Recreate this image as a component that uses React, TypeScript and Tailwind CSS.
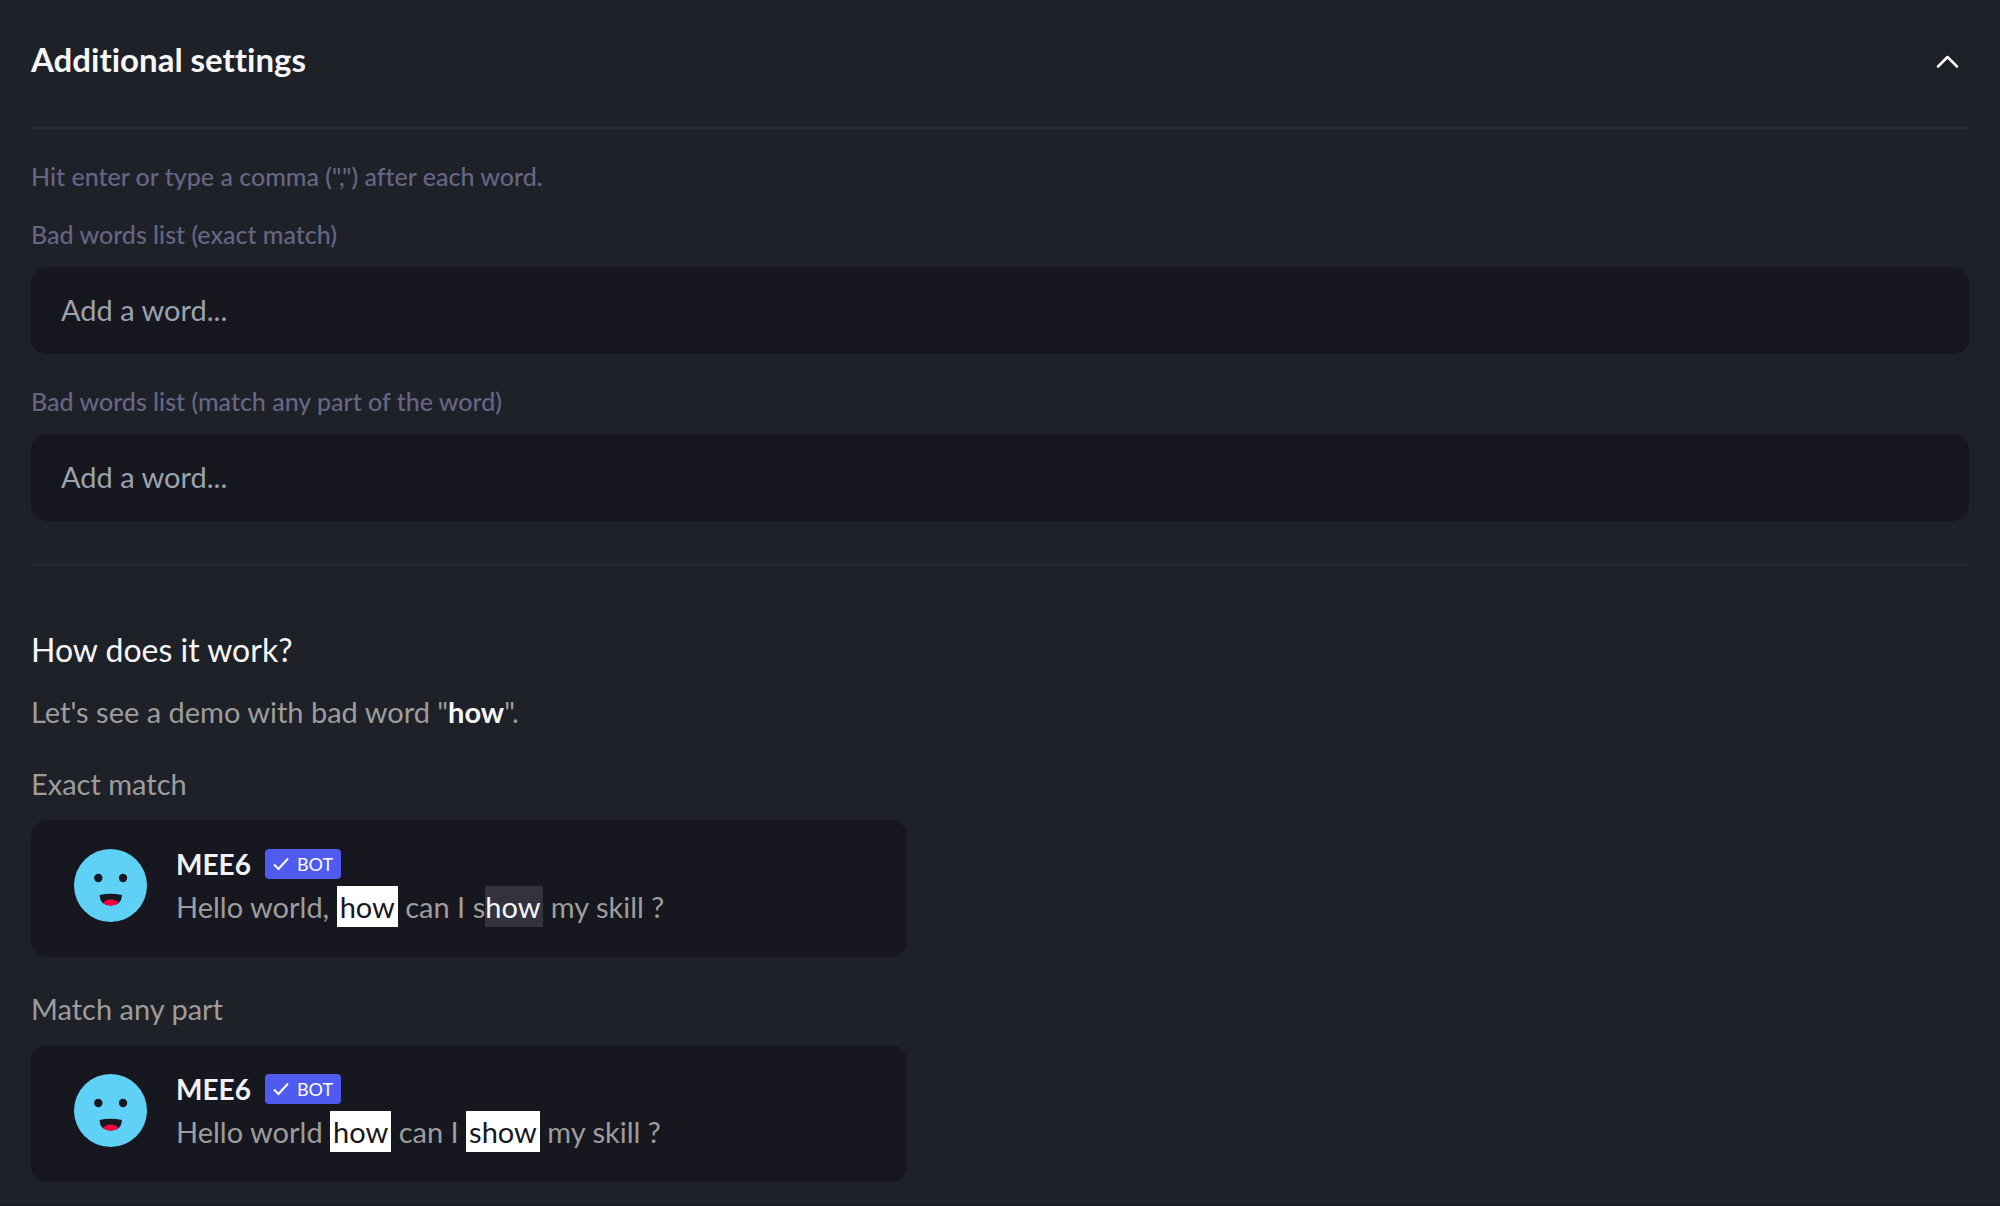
import { useState, type ReactNode } from 'react';

interface WordsFieldProps {
  id: string;
  label: string;
}

function WordsField({ id, label }: WordsFieldProps) {
  return (
    <div>
      <label htmlFor={id} className="block text-[25px] leading-[30px] font-medium text-[#666684]">
        {label}
      </label>
      <input
        id={id}
        type="text"
        placeholder="Add a word..."
        className="mt-[18px] block h-[87px] w-full rounded-2xl bg-[#17171f] px-[30px] pb-0.5 text-[29px] text-white outline-none placeholder:text-[#9ca3af]"
      />
    </div>
  );
}

function Avatar() {
  return (
    <svg viewBox="0 0 73 73" className="size-[73px] shrink-0" aria-hidden="true">
      <circle cx="36.5" cy="36.5" r="36.5" fill="#60d1f6" />
      <circle cx="24.3" cy="29" r="4.2" fill="#17171f" />
      <circle cx="49" cy="29" r="4.2" fill="#17171f" />
      <path d="M25.500 46Q36.500 43.500 48 46Q47.500 56.500 36.700 56.500Q26 56.500 25.500 46Z" fill="#17171f" />
      <path d="M29 54Q31.500 50.500 36.700 50.500Q42 50.500 44.500 54Q41.500 56.800 36.700 56.800Q32 56.800 29 54Z" fill="#ff003d" />
    </svg>
  );
}

function Match({ children }: { children: ReactNode }) {
  return <mark className="inline-block bg-white px-[3px] leading-[41px] text-[#17171f]">{children}</mark>;
}

interface DemoProps {
  title: string;
  children: ReactNode;
}

function Demo({ title, children }: DemoProps) {
  return (
    <section className="flex max-w-[876px] flex-col gap-4">
      <h3 className="text-[29px] leading-10 text-[#9d9d9d]">{title}</h3>
      <div className="flex gap-[29px] rounded-2xl bg-[#17171f] pt-[29px] pr-8 pb-[30px] pl-[43px]">
        <Avatar />
        <div>
          <div className="flex items-center gap-[14px]">
            <span className="text-[28px] leading-[30px] font-bold text-[#f2f2fa]">MEE6</span>
            <span className="flex h-[30px] items-center gap-2 rounded bg-[#4f5bf0] px-2 text-lg leading-none text-white">
              <svg viewBox="0 0 16 14" className="h-[14px] w-4" fill="none" stroke="currentColor" strokeWidth="2" aria-hidden="true">
                <path d="M1 7.500L5.500 12L15 1.500" />
              </svg>
              BOT
            </span>
          </div>
          <p className="mt-[7px] text-[29px] leading-[41px] text-[#9d9d9d]">{children}</p>
        </div>
      </div>
    </section>
  );
}

export default function App() {
  const [open, setOpen] = useState(true);

  return (
    <main className="min-h-screen border-b-2 border-[#191a22] bg-[#1f2129] px-[31px] font-['Lato',sans-serif] [font-variant-ligatures:none]">
      <header className="flex items-center justify-between border-b-2 border-[#272934] pt-[35px] pb-11">
        <h1 className="text-[33px] leading-[48px] font-bold text-[#f7f7fb]">Additional settings</h1>
        <button
          type="button"
          aria-label="Toggle additional settings"
          aria-expanded={open}
          onClick={() => setOpen(!open)}
          className="mr-2 flex h-7 w-7 items-center justify-center text-white"
        >
          <svg viewBox="0 0 28 28" className={open ? 'size-7' : 'size-7 rotate-180'} fill="none" stroke="currentColor" strokeWidth="2.500" strokeLinecap="round" strokeLinejoin="round">
            <path d="M5 21.500L14.500 12L24 21.500" />
          </svg>
        </button>
      </header>

      {open && (
        <div className="border-b-2 border-[#272932] pt-8 pb-[43px]">
          <p className="mb-7 text-[25px] leading-[30px] font-medium text-[#666684]">
            Hit enter or type a comma (",") after each word.
          </p>
          <div className="flex flex-col gap-8">
            <WordsField id="exact-words" label="Bad words list (exact match)" />
            <WordsField id="partial-words" label="Bad words list (match any part of the word)" />
          </div>
        </div>
      )}

      <div className="pt-16 pb-5">
        <h2 className="text-[32px] leading-10 text-[#f7f7fb]">How does it work?</h2>
        <p className="mt-[22px] text-[29px] leading-10 text-[#9d9d9d]">
          Let's see a demo with bad word "<strong className="font-bold text-[#f7f7fb]">how</strong>".
        </p>
        <div className="mt-8 flex flex-col gap-8">
          <Demo title="Exact match">
            Hello world, <Match>how</Match> can I s
            <span className="inline-block bg-[#32333f] pr-[3px] leading-[41px] text-[#f7f7fb]">how</span> my skill ?
          </Demo>
          <Demo title="Match any part">
            Hello world <Match>how</Match> can I <Match>show</Match> my skill ?
          </Demo>
        </div>
      </div>
    </main>
  );
}
